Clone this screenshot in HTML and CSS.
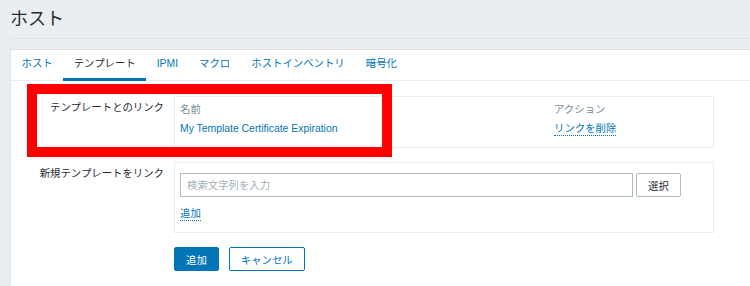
FILE: index.html
```html
<!DOCTYPE html>
<html>
<head>
<meta charset='utf-8'/>
<link rel="stylesheet" href="styles.css">
</head>
<body>
<div class='header'>
<h1 class='header-title'>ホスト</h1>
</div>
<div class='panel'>
<ul class='tabs'>
<li><a href='#'>ホスト</a></li>
<li class='active'><a href='#'>テンプレート</a></li>
<li><a href='#'>IPMI</a></li>
<li><a href='#'>マクロ</a></li>
<li><a href='#'>ホストインベントリ</a></li>
<li><a href='#'>暗号化</a></li>
</ul>
<div class='form'>
<div class='form-label'>テンプレートとのリンク</div>
<div class='form-field'>
<div class='box box-linked'>
<table class='linked'>
<tr><th class='col-name'>名前</th><th>アクション</th></tr>
<tr><td><a class='link' href='#'>My Template Certificate Expiration</a></td><td><a class='link-action' href='#'>リンクを削除</a></td></tr>
</table>
</div>
</div>
<div class='form-label'>新規テンプレートをリンク</div>
<div class='form-field'>
<div class='box box-new'>
<div class='search-row'>
<input class='search-input' type='text' placeholder='検索文字列を入力'/>
<button class='btn-grey'>選択</button>
</div>
<div class='add-row'><a class='link-action' href='#'>追加</a></div>
</div>
</div>
<div></div>
<div class='form-actions'>
<button class='btn-primary'>追加</button>
<button class='btn-alt'>キャンセル</button>
</div>
</div>
</div>
<div class='highlight'></div>
</body>
</html>
```

FILE: styles.css
```css
body {
    margin: 0;
    background: #ebeef0;
    color: #1f2c33;
    font-family: "Liberation Sans", "Noto Sans CJK JP", sans-serif;
    font-size: 10.4px;
    overflow: hidden;
}
a {
    color: #0275b8;
    text-decoration: none;
}
div.header {
    margin-left: 10px;
    height: 38px;
    border-bottom: 1px solid #dfe4e7;
}
h1.header-title {
    margin: 0;
    padding-top: 1px;
    font-size: 18px;
    font-weight: normal;
    line-height: 37px;
}
div.panel {
    margin: 10px -2px 0 10px;
    height: 236px;
    background: #fff;
    border: 1px solid #dfe4e7;
    border-bottom: none;
}
ul.tabs {
    display: flex;
    margin: 0;
    padding: 0;
    list-style: none;
    border-bottom: 1px solid #ebeef0;
}
ul.tabs li {
    padding: 0 10.5px;
    line-height: 28px;
    border-bottom: 3px solid transparent;
    margin-bottom: -1px;
}
ul.tabs li.active {
    border-bottom-color: #0275b8;
}
ul.tabs li.active a {
    color: #1f2c33;
}
div.form {
    display: grid;
    grid-template-columns: 163px 540px;
    row-gap: 14px;
    padding-top: 15px;
}
div.form-label {
    padding: 2px 10px 0 0;
    line-height: 19px;
    text-align: right;
}
div.box {
    border: 1px solid #ebeef0;
}
div.box-linked {
    padding: 3px 5px 9px;
}
table.linked {
    width: 100%;
    border-collapse: collapse;
}
table.linked th, table.linked td {
    padding: 0;
    line-height: 19px;
    text-align: left;
    font-weight: normal;
}
table.linked th {
    color: #768d99;
}
th.col-name {
    width: 374px;
}
a.link-action {
    border-bottom: 1px dotted #0275b8;
    padding-bottom: 1px;
}
div.box-new {
    padding: 10px 5px 9px;
}
div.search-row {
    display: flex;
    gap: 3px;
    height: 24px;
}
input.search-input {
    box-sizing: border-box;
    width: 453px;
    height: 24px;
    margin: 0;
    padding: 0 6px;
    border: 1px solid #acbbc4;
    font-family: inherit;
    font-size: 10.4px;
    color: #1f2c33;
}
input.search-input::placeholder {
    color: #a2afb7;
}
button {
    box-sizing: border-box;
    height: 24px;
    margin: 0;
    padding: 0 11px;
    font-family: inherit;
    font-size: 10.4px;
    border-radius: 2px;
    cursor: pointer;
}
button.btn-grey {
    background: #fff;
    border: 1px solid #acbbc4;
    color: #1f2c33;
}
div.add-row {
    margin-top: 7px;
    line-height: 19px;
}
div.form-actions {
    display: flex;
    gap: 10px;
}
button.btn-primary {
    background: #0275b8;
    border: 1px solid #0275b8;
    color: #fff;
}
button.btn-alt {
    background: #fff;
    border: 1px solid #0275b8;
    color: #0275b8;
}
div.highlight {
    position: absolute;
    left: 27px;
    top: 84px;
    width: 345px;
    height: 53px;
    border: 10px solid #ff0000;
}
```
